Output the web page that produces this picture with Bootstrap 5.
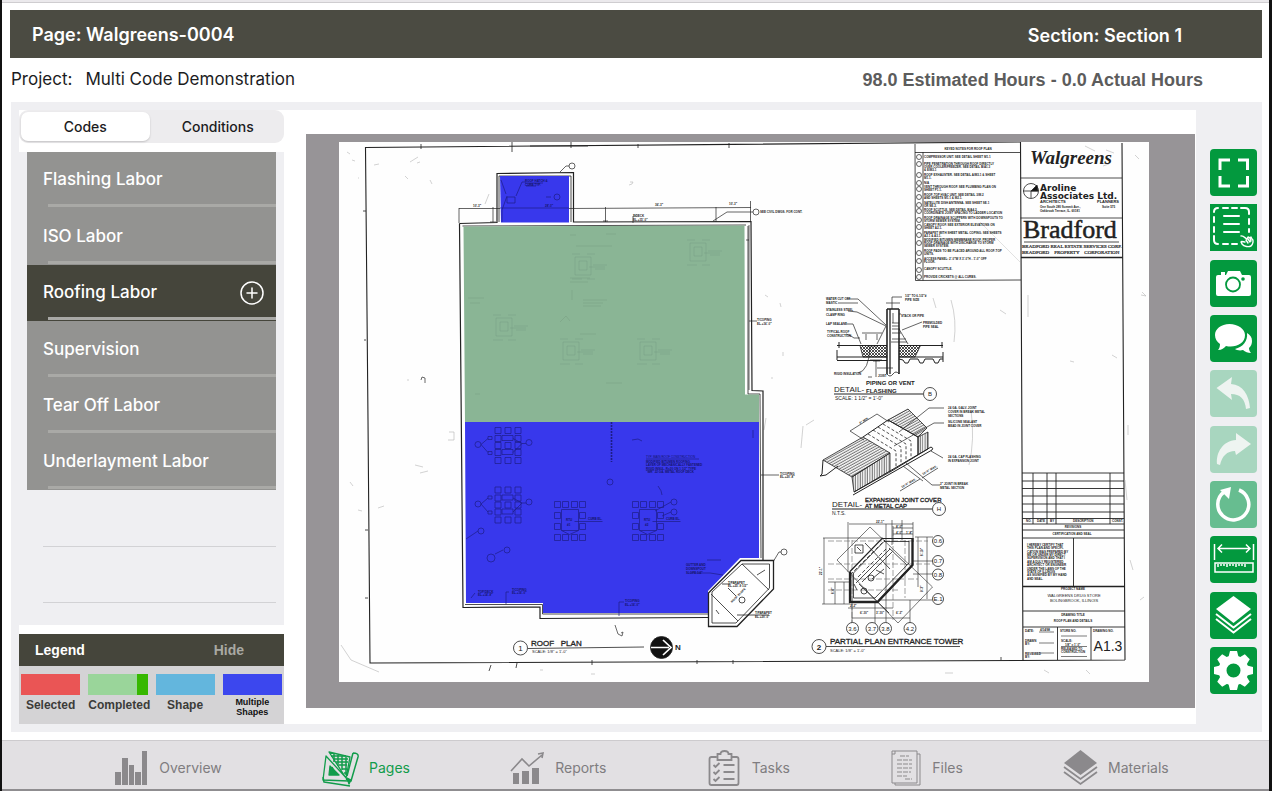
<!DOCTYPE html>
<html lang="en">
<head>
<meta charset="utf-8">
<meta name="viewport" content="width=device-width, initial-scale=1">
<title>Walgreens-0004</title>
<link href="https://cdn.jsdelivr.net/npm/bootstrap@5.3.0/dist/css/bootstrap.min.css" rel="stylesheet">
<style>
:root { --olive:#4b4b42; --olive-dark:#45453b; --panel:#efeff2; --green:#03993e; --grey:#8b898c; }
body { font-family: Inter, "Liberation Sans", sans-serif; color:#1c1c1e; background:#fff; border-left:2px solid #111; border-right:3px solid #111; }
.status-strip { height:3px; background:#ebe9ec; border-bottom:1px solid #cfcdd0; }
.page-head { background:var(--olive); color:#fff; height:48px; margin:7px 7px 0 8px; padding:2px 80px 0 22px; }
.page-head h1, .page-head p { font-size:18px; font-weight:600; margin:0; }
.project-line { height:44px; padding:0 66px 0 9px; font-size:17px; }
.project-line .gap-label { margin-right:13px; }
.hours { font-family:"Liberation Sans", sans-serif; font-weight:700; font-size:18px; color:#5c5c5c; }
.workspace { background:var(--panel); margin:0 7px 8px 9px; padding:8px 0 8px 8px; }
.side-pane { width:265px; flex:none; background:#fff; }
.segmented { background:#edecee; border-radius:9px; padding:2px; height:33px; margin-bottom:9px; gap:4px; }
.segmented button { flex:1; border:0; border-radius:7px; background:transparent; color:#1c1c1e; font-size:14px; font-weight:500; padding:0; }
.segmented button.active { background:#fff; box-shadow:0 1px 2px rgba(0,0,0,.18); }
.code-list { background:var(--panel); padding:0 8px 22px; }
.code-row { flex:1 1 56px; border:0; padding:0 12px 0 16px; background:#939391; color:#fff; font-size:17px; font-weight:500; text-align:left; position:relative; }
.code-row::after { content:""; position:absolute; left:21px; right:0; bottom:1px; height:3px; background:#a9a9a6; }
.code-row.active { background:var(--olive-dark); }
.code-blank { flex:1 1 56px; border-bottom:1px solid #d2d2d5; margin-left:16px; }
.legend-head { background:var(--olive-dark); color:#fff; height:32px; margin-top:9px; padding:0 40px 0 16px; font:700 14px "Liberation Sans", sans-serif; }
.legend-head button { border:0; background:transparent; color:#a9a9a3; font-weight:700; padding:0; }
.legend-body { background:#d4d3d5; height:58px; padding:8px 2px 0; gap:8px; font:700 12px/21px "Liberation Sans", sans-serif; color:#3c3c39; }
.legend-body > div { flex:1 1 0; min-width:0; text-align:center; white-space:nowrap; }
.swatch { height:21px; }
.sw-selected { background:#ea5555; } .sw-done { background:#9ad59a; border-right:11px solid #37b800; }
.sw-shape { background:#63b6dd; } .sw-multi { background:#3c47ee; }
.legend-small { font-size:9px; line-height:10px; color:#111; padding-top:2px; }
.viewer { background:#fff; padding:24px 1px 16px 22px; }
.canvas-area { background:#979497; padding:8px 46px 26px 33px; height:100%; }
.canvas-area svg { display:block; width:100%; height:auto; background:#fefefe; }
.tool-rail { width:66px; flex:none; padding:39px 5px 30px 14px; }
.tool { width:47px; height:47px; border:0; border-radius:4px; background:var(--green); color:#fff; padding:0; }
.tool svg { display:block; width:47px; height:47px; }
.tool.dim { background:#a8d6bf; color:#eef4f1; } .tool.half { background:#67bd90; }
.tabbar { background:#e2e0e3; border-top:1px solid #cdcbce; border-bottom:2px solid #8f8d90; height:51px; padding:5px 0 0 12px; }
.tabbar a { color:#7f7d80; text-decoration:none; font-size:14px; gap:10px; }
.tabbar a.active { color:#129c4b; }
.tabbar svg { width:35px; height:38px; }
.plan text { font-family:"Liberation Sans", sans-serif; fill:#222; stroke:none; }
.plan .t3 { font-size:3px; font-weight:700; } .plan .t4 { font-size:4px; } .plan .t6 { font-size:6px; } .plan .t8 { font-size:8px; }
.plan .mid { text-anchor:middle; } .plan .wt { font-weight:700; }
.plan .navy text { fill:#15156b; }
.plan .architect { font-family:"DejaVu Sans", sans-serif; font-size:9px; font-weight:700; }
.plan .owner { font-family:"Liberation Serif", serif; font-size:5px; stroke:#222; stroke-width:.2; }
</style>
</head>
<body class="d-flex flex-column min-vh-100">
<div class="status-strip"></div>
<header class="page-head d-flex justify-content-between align-items-center">
  <h1>Page: Walgreens-0004</h1><p>Section: Section 1</p>
</header>
<div class="project-line d-flex justify-content-between align-items-center">
  <div class="d-flex"><span class="gap-label">Project:</span><span>Multi Code Demonstration</span></div>
  <div class="hours">98.0 Estimated Hours - 0.0 Actual Hours</div>
</div>

<main class="workspace d-flex flex-grow-1">
  <aside class="side-pane d-flex flex-column">
    <div class="segmented d-flex"><button type="button" class="active">Codes</button><button type="button">Conditions</button></div>
    <div class="code-list d-flex flex-column flex-grow-1">
      <button type="button" class="code-row">Flashing Labor</button>
      <button type="button" class="code-row">ISO Labor</button>
      <button type="button" class="code-row active d-flex align-items-center justify-content-between">Roofing Labor
        <svg width="24" height="24" viewBox="0 0 24 24" fill="none" stroke="#fff" stroke-width="1.5" stroke-linecap="round"><circle cx="12" cy="12" r="11"/><path d="M12 7v10M7 12h10"/></svg></button>
      <button type="button" class="code-row">Supervision</button>
      <button type="button" class="code-row">Tear Off Labor</button>
      <button type="button" class="code-row">Underlayment Labor</button>
      <div class="code-blank"></div><div class="code-blank"></div>
    </div>
    <div class="legend-head d-flex justify-content-between align-items-center"><span>Legend</span><button type="button">Hide</button></div>
    <div class="legend-body d-flex">
      <div><div class="swatch sw-selected"></div>Selected</div>
      <div><div class="swatch sw-done"></div>Completed</div>
      <div><div class="swatch sw-shape"></div>Shape</div>
      <div><div class="swatch sw-multi"></div><div class="legend-small">Multiple<br>Shapes</div></div>
    </div>
  </aside>

  <section class="viewer flex-grow-1">
    <div class="canvas-area">
    <svg class="plan" viewBox="339 142 810 540" fill="none" stroke="#222" stroke-width=".8" role="img" aria-label="Roof plan drawing">
      <defs>
        <pattern id="hx" width="3" height="3" patternUnits="userSpaceOnUse"><path d="M0 0l3 3M3 0l-3 3" stroke="#222" stroke-width=".8"/></pattern>
        <pattern id="hl" width="4" height="2.4" patternUnits="userSpaceOnUse" patternTransform="rotate(-29)"><path d="M0 1h4" stroke="#333" stroke-width=".8"/></pattern>
        <pattern id="hv" width="2.4" height="4" patternUnits="userSpaceOnUse"><path d="M1 0v4" stroke="#333" stroke-width=".8"/></pattern>
        <g id="padsA" stroke="#1d1d86" stroke-width=".7">
          <path d="M0 0h6v6h-6zM10 0h6v6h-6zM20 0h6v6h-6zM0 8h6v6h-6zM20 8h6v6h-6zM0 15h6v6h-6zM10 15h6v6h-6zM20 15h6v6h-6zM0 22h6v6h-6zM20 22h6v6h-6zM0 30h6v6h-6zM10 30h6v6h-6zM20 30h6v6h-6z"/>
          <path d="M7 8h11v5h-11zM7 22h11v5h-11zM-7 9h4v3h-4zM-7 24h4v3h-4zM-7 11l-7 6 7 8M18 11l9 5-9 9M27 16h4"/><circle cx="-17" cy="17" r="3"/><circle cx="34" cy="15" r="3"/>
        </g>
        <g id="padsB" stroke="#1d1d86" stroke-width=".7">
          <path d="M0 0h6v6h-6zM8 0h6v6h-6zM17 0h6v6h-6zM25 0h6v6h-6zM0 11h6v6h-6zM25 11h6v6h-6zM0 22h6v6h-6zM25 22h6v6h-6zM0 33h6v6h-6zM8 33h6v6h-6zM17 33h6v6h-6zM25 33h6v6h-6zM7 8h17v21h-17zM7 29l8 4 9-4M20 20h28"/>
        </g>
        <g id="unit" stroke="#6d9079" stroke-width=".6" opacity=".45"><path d="M0 0h16v18h-16zM4 4h8v9h-8zM-3 -3h8M12 -3h8M-3 22h10M12 22h8M14 10h16M18 8h14M20 12h10"/></g>
      </defs>

      <!-- sheet frame -->
      <g stroke-width="1.1"><path d="M1020 142L365.500 147.500L368 420L370 663L1125 660M1020.500 142L1023 660M1122 143L1125 660"/></g>
      <path stroke-width=".8" d="M421 144v5M512 142v10M571 142v6M638 144v4M729 143v5M530 146h58M366 211h-3M366 340h-2M368 530h-3M368 598h-3M491 665l-2 6M517 663l-1 5M592 660v5M697 660v4M733 660v4M1001 660v-3"/>
      <g stroke="#b4b4b4" stroke-width=".6">
        <path d="M347 152l3 2M352 160l3 1M358 178h1M374 165l5-1M410 162l8-5M417 163l3-1M405 176l3 3M430 180l2 4M485 204l4-10M449 432h5v8h-6M350 482l3 4M358 510l4 1M378 508l6-2M415 465l8 2M420 473l8-2M407 380h2M341 645l10 15 28 12M540 670h3M591 674h4M630 182h3l-1 2-3 1M765 295l3 2M780 303l1 4M783 352v4M771 378h2M764 430l2-12M801 448l2-22M806 425l8-5M933 298l3 10M951 300q6 20 3 42M971 410q4 30-2 55M1028 295v22M1142 292l4 4-5-1M1070 361l4 1M1112 355l5 3M1000 310l6 4M1085 146l10 5M1106 150l8 3M1103 166l6-2M1135 155l4 4M1128 425v10M1130 560l3 10M1140 600l4-3M1086 670l4 4M1044 670l5 3M945 673h8M1125 480l2 20"/>
        <path d="M980 222l40 40" stroke="#ccc"/>
      </g>
      <path d="M421 380l1-3 3 1v5" stroke="#444"/>
      <path d="M615 625l3 9 4 2 1-4-2 1" stroke="#444"/>

      <!-- building walls -->
      <g stroke-width="1.2">
        <path d="M459.500 223.500L497 222.500V173.500L573.500 172.500V222L751 221.500L752 390.500L763 391V560M459.500 223.500L463 607.500L540 607V618.500L708 617.500"/>
        <path stroke-width=".8" d="M499 222V176H571V222M462.500 226L746 225M748 226L748 394H760L761 558M465 604.500H542.500V614H708"/>
      </g>
      <!-- measured shapes -->
      <path d="M463.500 226.500L744.500 225.500L745 394.500H759V422H465z" fill="#8ab595" stroke="none"/>
      <g fill="#3838ec" stroke="none"><path d="M500 176H569V222.500H501z"/><path d="M465 422H759V558H740L708 591V613H543V603H466z"/></g>
      <use href="#unit" x="575" y="257"/><use href="#unit" x="496" y="318"/><use href="#unit" x="563" y="342"/><use href="#unit" x="640" y="342"/><use href="#unit" x="690" y="243"/>
      <g stroke="#6d9079" stroke-width=".8" opacity=".4"><path d="M576 246h36M606 234h10M570 235h6M583 300h24M583 303h20M583 306h18M572 290v10M560 322l6-6 4 5M468 298h16M470 303h10M606 383h16M475 394h5M570 278h20M570 282h18M580 334h16"/></g>
      <g stroke="#1d1d86" stroke-width=".7">
        <path d="M501 180l5 14M502 222v-12l5-14M507 197h8v6h-8zM516 196l6-14h4M546 197h5M525 183h18M526 186h10M500 208h69"/><circle cx="557" cy="197" r="3"/>
        <path d="M495 554l8-4M466 539l12-8M506 604v-12h3M619 616v-14h5M471 598l4-5M690 573l20 0 13 2M707 560h14M632 440l6-1 4 2M658 486q4 5 4 9M753 430v8"/>
        <circle cx="491" cy="558" r="4"/><circle cx="507" cy="550" r="3"/><circle cx="481" cy="531" r="3"/><circle cx="610" cy="482" r="3"/><circle cx="674" cy="502" r="3"/><circle cx="674" cy="512" r="3"/><path d="M671 502l-16 9M671 512l-9 4"/>
        <path d="M611.500 422v40" stroke-width="1.600" stroke-dasharray="2 1"/><path d="M646 459h53"/>
      </g>
      <use href="#padsA" x="495" y="427.500"/><use href="#padsA" x="495" y="487"/><use href="#padsB" x="554.500" y="501.500"/><use href="#padsB" x="632.500" y="501.500"/>
      <g class="navy">
        <text class="t3" x="525" y="182">ROOF HATCH &amp;</text><text class="t3" x="525" y="186">CURB TYP.</text>
        <text x="646" y="458" class="t4" style="font-size:3px">TYP. MAIN ROOF CONSTRUCTION</text>
        <text class="t3" x="646" y="463">MODIFIED BITUMEN ROOFING</text><text class="t3" x="646" y="466">LAYER OF MECHANICALLY FASTENED</text><text class="t3" x="646" y="470">RIGID INSUL. R=20 ON 1 1/2" TYPE</text><text class="t3" x="646" y="473">"WR" 22 GA. METAL ROOF DECK</text>
        <text class="t3" x="478" y="593">TOP/DECK</text><text class="t3" x="478" y="596">EL.+14'-8"</text><text class="t3" x="512" y="591">T/COPING</text><text class="t3" x="512" y="594">EL.+16'-0"</text><text class="t3" x="625" y="602">T/COPING</text><text class="t3" x="625" y="606">EL.+16'-0"</text>
        <text class="t3" x="686" y="566">GUTTER AND</text><text class="t3" x="686" y="570">DOWNSPOUT</text><text class="t3" x="686" y="574">SLOPE 1/4"</text>
        <text class="t3" x="566" y="521">RTU</text><text class="t3" x="567" y="526">#1</text><text class="t3" x="644" y="521">RTU</text><text class="t3" x="645" y="526">#2</text><text class="t3" x="588" y="520">CURB EL.</text><text class="t3" x="666" y="520">CURB EL.</text><text class="t3" x="545" y="207">28'-0"</text>
      </g>

      <!-- dimensions -->
      <g stroke-width=".7">
        <path d="M459 223v-15M459 208.500h41M569 208.500L751 207.500M493 207v15M605.500 207v15M716 207v15M750.500 201v20M490 222h6M603 221h5M713 221l14-9h26M633 223v-7h3M560 172l6-6h3M749 321h8M761 475h18M749 225v165M746 240h3"/>
        <circle cx="572" cy="166" r="3"/><circle cx="756" cy="212" r="3"/><circle cx="784" cy="552" r="3"/><path d="M773 562l6-10h2"/>
        <text class="t3" x="473" y="207">10'-3"</text><text class="t3" x="655" y="206">36'-3"</text><text class="t3" x="729" y="205">10'-3"</text><text class="t3" x="633" y="217">T/DECK</text><text class="t3" x="633" y="221">EL.+15'-0"</text>
        <text class="t3" x="760" y="213">SEE CIVIL DWGS. FOR CONT.</text><text class="t3" x="757" y="321">T/COPING</text><text class="t3" x="757" y="325">EL.+16'-0"</text><text class="t3" x="780" y="475">T/COPING</text><text class="t3" x="780" y="478">EL.+20'-8"</text>
      </g>

      <!-- entrance tower on roof -->
      <path d="M708.500 593L741 560.500H773.500V589L737 626.500H708.500z" fill="#fff" stroke-width="1.300"/>
      <path stroke-width=".8" d="M712 592L742 564H769.500V588L736 623H712zM742 564L769 590M711 594L738 621M757 575l8-5M722 584h8M719 614l-3-4M728 588l8 8M737 615h32"/>
      <circle cx="742" cy="600" r="3"/>
      <text class="t3" x="728" y="584">T/PARAPET</text><text class="t3" x="728" y="587">EL.+25'-9 1/2"</text><text class="t3" x="755" y="614">T/PARAPET</text><text class="t3" x="755" y="618">EL.+20'-0"</text><text class="t3" x="732" y="603" transform="rotate(-45 732 603)">ROOF SLOPE</text>

      <!-- plan title -->
      <circle cx="520.500" cy="648" r="7"/><text class="t8 mid" x="520.500" y="651">1</text>
      <text class="t8" x="531" y="646" xml:space="preserve" style="stroke:#222;stroke-width:.3">ROOF   PLAN</text><path d="M528 648.500L644 647"/><text class="t4" x="532" y="652.500">SCALE: 1/8" = 1'-0"</text>
      <circle cx="661.500" cy="647.500" r="11" fill="#111"/><path d="M651 647.500h18M663 640l8 7.500-8 7.500" stroke="#fff" stroke-width="1.700"/><text class="t8 wt" x="675" y="650">N</text>

      <!-- keyed notes -->
      <path d="M915 144L915.500 280.500L1021 280M915 152.500H1020M923 152V280.500"/>
      <text class="t3 mid" x="968" y="149.500">KEYED NOTES FOR ROOF PLAN</text>
      <g stroke-width=".7"><circle cx="919" cy="157" r="2.500"/><circle cx="919" cy="164" r="2.500"/><circle cx="919" cy="175" r="2.500"/><circle cx="919" cy="183" r="2.500"/><circle cx="919" cy="189" r="2.500"/><circle cx="919" cy="197" r="2.500"/><circle cx="919" cy="205" r="2.500"/><circle cx="919" cy="211" r="2.500"/><circle cx="919" cy="220" r="2.500"/><circle cx="919" cy="227" r="2.500"/><circle cx="919" cy="235" r="2.500"/><circle cx="919" cy="243" r="2.500"/><circle cx="919" cy="253" r="2.500"/><circle cx="919" cy="261" r="2.500"/><circle cx="919" cy="270" r="2.500"/><circle cx="919" cy="277" r="2.500"/></g>
      <g class="t3">
        <text x="924" y="158">COMPRESSOR UNIT. SEE DETAIL SHEET M1.1</text><text x="924" y="165">PIPE PENETRATION THROUGH ROOF DIRECTLY</text><text x="924" y="168">OVER COOLER/FREEZER. SEE DETAIL B/A1.3</text><text x="924" y="171">&amp; E/M3.1</text><text x="924" y="176">ROOF EXHAUSTER. SEE DETAIL A/M3.1 &amp; SHEET</text><text x="924" y="179">M1.1.</text><text x="924" y="184">N/A</text><text x="924" y="188">VENT THROUGH ROOF. SEE PLUMBING PLAN ON</text><text x="924" y="191">SHEET P1.1.</text><text x="924" y="196">ROOF-TOP HVAC UNIT. SEE DETAIL 3/M.2</text><text x="924" y="199">AND SHEETS M1.1 &amp; M2.1.</text><text x="924" y="204">SATELLITE DISH ANTENNA. SEE SHEET SE.1</text><text x="924" y="207">OR SE.2.</text><text x="924" y="211">ROOF SCUTTLE. SEE DETAIL B/A4.2.</text><text x="924" y="214">COORDINATE JOIST SPACING TO LADDER LOCATION</text><text x="924" y="219">ROOF DRAINAGE SCUPPERS WITH DOWNSPOUTS TO</text><text x="924" y="222">STORM SEWER SYSTEM.</text><text x="924" y="226">CANOPY ROOF. SEE EXTERIOR ELEVATIONS ON</text><text x="924" y="229">SHEET A2.1.</text><text x="924" y="234">PARAPET WITH SHEET METAL COPING. SEE SHEETS</text><text x="924" y="237">A2.1 &amp; A3.1.</text><text x="924" y="241">MODIFIED BITUMEN MEMBRANE ROOF. PROPER</text><text x="924" y="244">ROOF DRAINAGE WITH DISCHARGE TO STORM</text><text x="924" y="247">SEWER SYSTEM.</text><text x="924" y="252">ROOF PADS TO BE PLACED AROUND ALL ROOF-TOP</text><text x="924" y="255">UNITS.</text><text x="924" y="260">ACCESS PANEL: 2'-0"W X 3'-0"H - 1'-0" OFF</text><text x="924" y="263">FLOOR.</text><text x="924" y="270">CANOPY SCUTTLE.</text><text x="924" y="278">PROVIDE CRICKETS @ ALL CURBS.</text>
      </g>

      <!-- title block -->
      <text x="1030" y="164" style="font:italic 700 19px 'Liberation Serif',serif">Walgreens</text>
      <path d="M1020.500 178H1122M1020.500 218H1122"/><path d="M1021 257.500H1122.500" stroke-width="1.600"/><path d="M1024 242H1119"/>
      <circle cx="1031" cy="191" r="7.500"/><path d="M1031 191h7l-1-6z" fill="#111"/><path d="M1023 191h15M1031 191v7"/>
      <text class="architect" x="1040" y="191">Aroline</text><text class="architect" x="1040" y="199">Associates Ltd.</text>
      <text class="t4 wt" x="1040" y="203">ARCHITECTS</text><text class="t4 wt" x="1097" y="203">PLANNERS</text><text class="t3" x="1040" y="208">One South 280 Summit Ave.,</text><text class="t3" x="1102" y="208">Suite 575</text><text class="t3" x="1040" y="212">Oakbrook Terrace, IL. 60181</text>
      <text x="1023" y="238" style="font:26px 'Liberation Serif',serif;stroke:#222;stroke-width:.5">Bradford</text>
      <text class="owner" x="1022" y="248">BRADFORD REAL ESTATE SERVICES CORP.</text><text class="owner" x="1022" y="254" xml:space="preserve">BRADFORD    PROPERTY    CORPORATION</text>
      <path stroke-width=".9" d="M1022 473H1124M1022 481H1124M1022 488.500H1124M1022 496H1124M1022 504H1124M1022 512H1124M1022 518.500H1124M1022 524H1124M1022 530H1124M1023 538H1124M1023 611H1125M1023 627H1125M1033 473V524M1047 473V524M1056 473V524M1110 473V524M1073.500 538V586M1057.500 627V660M1091 627V660"/><path d="M1023 586.500H1125" stroke-width="1.500"/>
      <g class="t3"><text x="1026" y="522">NO.</text><text x="1037" y="522">DATE</text><text x="1050" y="522">BY</text><text x="1073" y="522">DESCRIPTION</text><text x="1112" y="522">CONST.</text><text class="mid" x="1073" y="528">REVISIONS</text><text class="mid" x="1072" y="535">CERTIFICATION AND SEAL</text>
        <text x="1027" y="546">I HEREBY CERTIFY THAT</text><text x="1027" y="549">THIS PLAN AND SPECIFI-</text><text x="1027" y="553">CATION WAS PREPARED BY</text><text x="1027" y="556">ME OR UNDER MY DIRECT</text><text x="1027" y="559">SUPERVISION AND THAT I</text><text x="1027" y="563">AM A DULY REGISTERED</text><text x="1027" y="566">ARCHITECT OR ENGINEER</text><text x="1027" y="570">UNDER THE LAWS OF THE</text><text x="1027" y="573">STATE OF ILLINOIS</text><text x="1027" y="576">AS SIGNIFIED BY MY HAND</text><text x="1027" y="580">AND SEAL.</text>
        <text class="mid" x="1073" y="590">PROJECT NAME</text><text class="mid" x="1073" y="616">DRAWING TITLE</text><text class="mid" x="1073" y="622">ROOF PLAN AND DETAILS</text>
        <text x="1025" y="632">DATE:</text><text x="1040" y="631">4/14/98</text><text x="1060" y="632">STORE NO.</text><text x="1093" y="632">DRAWING NO.</text><text x="1025" y="642">DRAWN</text><text x="1025" y="645">BY:</text><text x="1025" y="655">REVIEWED</text><text x="1025" y="658">BY:</text><text x="1061" y="642">SCALE:</text><text x="1065" y="646">1/8" = 1'-0"</text><text x="1061" y="650">RELEASED TO</text><text x="1061" y="653">CONSTRUCTION</text></g>
      <text class="t4 mid" x="1074" y="597">WALGREENS DRUG STORE</text><text class="t4 mid" x="1074" y="602">BOLINGBROOK, ILLINOIS</text>
      <path stroke-width=".6" d="M1039 632h15M1039 643h15M1039 653h15M1061 636h26M1061 646.500h26M1061 656.500h26"/>
      <text class="mid" x="1108" y="651" style="font-family:'Liberation Sans Narrow','Liberation Sans',sans-serif;font-size:14px">A1.3</text>

      <!-- detail B, pipe flashing -->
      <path d="M860 345.500H920.500L915 357H863z" fill="url(#hx)"/>
      <path d="M837 345.500H943M837 357H943M837 360.500H887M899 359l4 1 2 3h3l2-4h8l2 4h3l2-4h8l2 4h3l2-4h3M839 342v6M942 342v6M837 350v10M943 352v10" stroke-width="1"/>
      <path d="M887 309V374q3 4 6 0t6 0V309" fill="#fff"/><path d="M887 309V374M890 309V374M899 309V374M887 309H899" stroke-width="1.300"/>
      <path d="M886 326l-9 18M899 329l9 15M892 323h7M892 326h7M892 329h8M892 333h9M892 339h14M891 342h16M893 313v10M870 360h12M876 361v16M873 361h7M866 334v6M877 334v6M862 333h20M868 377h4M877 368h16M892 297v12M886 303h14M892 297h10M847 299h11l28 26M838 303h20M848 311l9 1 29 14M845 324h8l8 20M846 334q6 2 8 4h6M899 314h2M902 330l20-8M870 347q-1 24-12 26M867 346h10" stroke-width=".7"/>
      <g class="t3"><text x="826" y="300">WATER CUT OFF</text><text x="826" y="304">MASTIC</text><text x="826" y="311">STAINLESS STEEL</text><text x="826" y="316">CLAMP RING</text><text x="826" y="325">LAP SEALANT</text><text x="827" y="333">TYPICAL ROOF</text><text x="827" y="337">CONSTRUCTION</text><text x="905" y="297">1/2" TO 6-1/2"#</text><text x="905" y="301">PIPE SIZE</text><text x="901" y="317">STACK OR PIPE</text><text x="923" y="324">PREMOLDED</text><text x="923" y="328">PIPE SEAL</text><text x="834" y="375">RIGID INSULATION</text><text x="878" y="377">JOIST</text></g>
      <text class="t6 wt" x="866" y="385">PIPING OR VENT</text><text class="t8" x="834" y="392">DETAIL-</text><text class="t6 wt" x="866" y="392.500">FLASHING</text><path d="M834 394H923" stroke-width="1.200"/><text x="835" y="400" style="font-size:5px">SCALE: 1 1/2" = 1'-0"</text><circle cx="930" cy="394" r="6.500"/><text class="t6 mid" x="930" y="396">B</text>

      <!-- detail H, expansion joint cover -->
      <path d="M823 460L863 437L890 453L852 477z" fill="url(#hl)"/><path d="M852 477L890 453V472L854 492z" fill="url(#hv)"/>
      <path d="M888 420L908 409L927 428L918 437z" fill="url(#hl)"/><path d="M918 437L928 432V449L918 455z" fill="url(#hv)"/>
      <path d="M823 460L822 474L820 476M863 437L888 420L918 437V455L890 472M854 492L931 447M853 495L932 450M931 447q3 1 1 3M820 476l6-1 12-9" stroke-width="1"/>
      <path d="M868 434l28 17v17M873 430l28 17v18M878 427l28 17v18M883 424l28 17v17" stroke-dasharray="3 2"/>
      <path d="M850 431L877 414M850 431l14 9M877 414l12 8M899 432l30-24h15M894 446l40-23h10M931 451l12 7M906 463l26 22h8M903 466l20 15M900 491L920 479M922 478L938 468" stroke-width=".7"/>
      <g class="t3"><text x="948" y="409">24 GA. GALV. JOINT</text><text x="948" y="413">COVER IN BREAK METAL</text><text x="948" y="417">SECTIONS</text><text x="948" y="423">SILICONE SEALANT</text><text x="948" y="427">BEAD IN JOINT COVER</text><text x="948" y="458">24 GA. CAP FLASHING</text><text x="948" y="462">IN EXPANSION JOINT</text><text x="940" y="485">2" JOINT IN BREAK</text><text x="940" y="489">METAL SECTION</text><text x="860" y="424" transform="rotate(-30 860 424)">6" MIN.</text><text x="902" y="488" transform="rotate(-30 902 488)">10'-0" MAX.</text><text x="923" y="475" transform="rotate(-30 923 475)">10'-0" MAX.</text></g>
      <text class="t6 wt" x="865" y="501.500" style="font-weight:400;stroke:#222;stroke-width:.3">EXPANSION JOINT COVER</text><text class="t8" x="832" y="507">DETAIL-</text><text class="t6 wt" x="865" y="507.500" style="font-weight:400;stroke:#222;stroke-width:.3">AT METAL CAP</text><path d="M832 509H932" stroke-width="1.200"/><text x="832" y="515" style="font-size:5px">N.T.S.</text><circle cx="939" cy="509" r="6.500"/><text class="t6 mid" x="939" y="511">H</text>

      <!-- partial plan, entrance tower -->
      <g stroke-width=".6"><path d="M837 560L870 527L932.500 587L898 623zM849 524H913M848 522v50M913 522v20M893 528h20M893 534h20M893 526v15M823 538h60M824 538V604M822 604h28M852 574v52M875 602v24M886 524v104M910 600v26M852 618h58M848 608h45M918 537v50M927 537v62M915 537h18M913 561h20M913 574h20M880 600h52M835 582v22M844 582v22M828 582h22M892 520v25M902 520v20"/>
        <path d="M828 541h100M828 564h105M828 579h90M828 590h70M893 530v90M905 540v58M852 540v90" stroke-dasharray="6 2" stroke="#666"/></g>
      <path d="M850 571.500L882 538.500H912.500V565L877.500 602H850z" stroke-width="1.200"/><path d="M912.500 538V565L877.500 602H850V572" stroke-width="2.300"/>
      <path d="M853.500 573L884 541.500H909M909 541V563L875 598H853.500V573M856 583l34-34M862 582l30-30M859 584l30 29M889 548l18 17M865 543l25 26M857 590l-3-6"/><path d="M850 575l35-35M858 577l28-28" stroke-dasharray="4 2"/>
      <path d="M855 545h8v8h-8zM857 547l4 4" /><circle cx="871" cy="578" r="3"/><circle cx="864" cy="591" r="3"/><path d="M872 579l12-10M876 570l8 4"/>
      <g fill="#fff"><circle cx="938" cy="541" r="5.500"/><circle cx="938" cy="561" r="5.500"/><circle cx="938" cy="574.500" r="5.500"/><circle cx="938" cy="599" r="5.500"/><circle cx="852.500" cy="628.500" r="6"/><circle cx="872" cy="628.500" r="6"/><circle cx="885.500" cy="628.500" r="6"/><circle cx="910" cy="628.500" r="6"/></g>
      <g class="mid t6"><text x="938" y="543">0.6</text><text x="938" y="563">0.7</text><text x="938" y="577">0.8</text><text x="938" y="601">E.1</text><text x="852.500" y="631">3.6</text><text x="872" y="631">3.7</text><text x="885.500" y="631">3.8</text><text x="910" y="631">4.2</text></g>
      <g class="t3"><text x="876" y="523">22'-1"</text><text x="896" y="528">8'-0"</text><text x="896" y="534">4'-0"</text><text x="906" y="534">1'-8"</text><text x="860" y="614">6'-10"</text><text x="876" y="614">3'-10"</text><text x="896" y="614">6'-3"</text><text x="850" y="607">2'-2"</text><text x="822" y="575" transform="rotate(-90 822 575)">22'-1"</text><text x="923" y="556" transform="rotate(-90 923 556)">6'-10"</text><text x="923" y="592" transform="rotate(-90 923 592)">8'-3"</text><text x="834" y="594" transform="rotate(-90 834 594)">6'-0"</text></g>
      <circle cx="819" cy="646.500" r="7"/><text class="t8 mid wt" x="819" y="649.500">2</text><text class="t8" x="830" y="644" style="stroke:#222;stroke-width:.3">PARTIAL PLAN ENTRANCE TOWER</text><path d="M826 646.500H960"/><text class="t4" x="830" y="651.500">SCALE: 1/8" = 1'-0"</text>
    </svg>
    </div>
  </section>

  <nav class="tool-rail d-flex flex-column justify-content-between" aria-label="Drawing tools">
    <button type="button" class="tool" aria-label="Full screen"><svg viewBox="0 0 47 47" fill="none" stroke="currentColor" stroke-width="3"><path d="M10 21V11H20M28 11H37.500V21M37.500 27V37H28M20 37H10V27"/></svg></button>
    <button type="button" class="tool rounded-0" aria-label="Select area"><svg viewBox="0 0 47 47" fill="none" stroke="currentColor" stroke-width="2" stroke-linecap="round"><path d="M4 8q0-4 4-4M13 4h5M22 4h5M31 4h4q4 0 4 4v2M39 15v5M39 25v3M4 13v5M4 23v5M4 32v4q0 4 4 4M13 40h5M22 40h5M14 12h15M14 20h15M14 28h15"/><path stroke-width="1.400" stroke-linejoin="round" d="M31 32c2-1 5 3 6 3l1-2 2 1 1-1 1 2c2 1 1 5-1 7-2 1-7 1-9-2l-1-2c0-1 3 0 4 0M36 36l2 3M38 35l2 3M40 34l1 3"/></svg></button>
    <button type="button" class="tool" aria-label="Camera"><svg viewBox="0 0 47 47"><path fill="currentColor" d="M8 15q-2 0-2 2v17q0 2 2 2h31q2 0 2-2V17q0-2-2-2h-7l-2-4H18l-2 4h-1v-3h-4v3z"/><circle cx="23" cy="24.500" r="7" fill="none" stroke="#03993e" stroke-width="1.800"/><circle cx="33" cy="19" r="1.800" fill="#03993e"/></svg></button>
    <button type="button" class="tool" aria-label="Comments"><svg viewBox="0 0 47 47" fill="currentColor"><path d="M19.500 9C11 9 5 14 5 20c0 4 2 7 5 9 0 3-1 5-2 6 4 0 6-2 8-4 9 2 19-2 19-11 0-6-7-11-15.500-11z"/><path d="M37 18c3 2 5 4 5 8 0 3-1 5-3 7 0 2 1 4 2 5-3 0-6-1-8-3-3 1-7 0-8-1 8-2 13-8 12-16z"/></svg></button>
    <button type="button" class="tool dim" aria-label="Undo"><svg viewBox="0 0 47 47" fill="currentColor"><path d="M6.500 18L22 7l-1 7c12 1 18 11 19 24l-4 1c-1-10-6-15-15-15l1 6z"/></svg></button>
    <button type="button" class="tool dim" aria-label="Redo"><svg viewBox="0 0 47 47" fill="currentColor"><path d="M41 18L26 7v7C13 15 6 26 7 38l3 1c2-9 7-14 15-14l1 4z"/></svg></button>
    <button type="button" class="tool half" aria-label="Reset"><svg viewBox="0 0 47 47" fill="none" stroke="currentColor"><path d="M29 9A15.500 15.500 0 1 1 14 11" stroke-width="3.500"/><path d="M10 9l11-3-2 12z" fill="currentColor" stroke="none"/></svg></button>
    <button type="button" class="tool" aria-label="Measure"><svg viewBox="0 0 47 47" fill="none" stroke="currentColor" stroke-width="1.500"><path d="M4.500 8V24M43.500 8V24M8 12.500H40M12 8.500l-4 4 4 4M36 8.500l4 4-4 4M5 27H43V36H5zM8 28v3M11 28v2M14 28v2M17 28v3M20 28v2M23 28v2M26 28v3M29 28v2M32 28v2M35 28v3"/></svg></button>
    <button type="button" class="tool" aria-label="Layers"><svg viewBox="0 0 47 47"><path fill="currentColor" d="M23.500 4L41 17 23.500 31 6 17z"/><path fill="none" stroke="currentColor" stroke-width="2" d="M6 22l17.500 13.500L41 22M6 27l17.500 13.500L41 27"/></svg></button>
    <button type="button" class="tool" aria-label="Settings"><svg viewBox="0 0 47 47"><defs><path id="tooth" fill="currentColor" d="M18 12L20 4H27L29 12z"/></defs><circle cx="23.500" cy="23.500" r="11" fill="none" stroke="currentColor" stroke-width="8"/><use href="#tooth"/><use href="#tooth" transform="rotate(45 23.500 23.500)"/><use href="#tooth" transform="rotate(90 23.500 23.500)"/><use href="#tooth" transform="rotate(135 23.500 23.500)"/><use href="#tooth" transform="rotate(180 23.500 23.500)"/><use href="#tooth" transform="rotate(225 23.500 23.500)"/><use href="#tooth" transform="rotate(270 23.500 23.500)"/><use href="#tooth" transform="rotate(315 23.500 23.500)"/></svg></button>
  </nav>
</main>

<nav class="tabbar d-flex justify-content-evenly" aria-label="Main">
  <a href="#" class="d-flex align-items-center"><svg viewBox="0 0 35 38" fill="#8b898c"><path d="M1 23h6v13H1zM8 9h6v27H8zM15 16h5v20h-5zM21 23h6v13h-6zM28 2h5v34h-5z"/></svg>Overview</a>
  <a href="#" class="active d-flex align-items-center"><svg viewBox="0 0 37 38" style="width:37px" fill="none" stroke="#129c4b" stroke-width="1.300" stroke-linejoin="round"><path d="M7 3L28 8 24 29zM4 7L27 32 1 31z"/><path d="M8 17l9 9-10 0z" fill="#129c4b"/><path d="M10 18l3 6M9 7h15M12 10h14M14 13h12M17 16h8M20 20h5M22 24h3M12 5v8M16 6v11M20 7v14M24 8v18" stroke-width="1.500"/><path d="M31 4q6 0 5 4l-7 24-5-2M31 4l-6 23M1 28l1 5 26 4" stroke-width="1.500"/><path d="M25 29l4 2-2 4z" fill="#129c4b"/></svg>Pages</a>
  <a href="#" class="d-flex align-items-center"><svg viewBox="0 0 35 38"><path fill="#8b898c" d="M3 24h6v11H3zM12 22h7v13h-7zM22 19h7v16h-7z"/><path fill="none" stroke="#8b898c" stroke-width="1.600" d="M1 22L12 10l7 7L32 6M28 5l5-1-1 5"/></svg>Reports</a>
  <a href="#" class="d-flex align-items-center"><svg viewBox="0 0 34 38" fill="none" stroke="#8b898c" stroke-width="1.800"><path d="M9 8H4q-2 0-2 2v24q0 2 2 2h25q2 0 2-2V10q0-2-2-2h-5M10 5h3q0-3 4-3t4 3h3v6H10zM6 16l2 2 4-4M6 23l2 2 4-4M6 30l2 2 4-4M16 16h11M16 23h11M16 30h11"/></svg>Tasks</a>
  <a href="#" class="d-flex align-items-center"><svg viewBox="0 0 32 38" style="width:32px" fill="none" stroke="#8b898c"><path d="M2 2H27V34H2zM5 36H30V5M27 5h3M5 34v2M5 2v3H2"/><path stroke-width="1.200" stroke-dasharray="5 1" d="M10 7h9M7 11h15M7 15h15M7 19h15M7 23h14M7 27h10M15 30h7"/></svg>Files</a>
  <a href="#" class="d-flex align-items-center"><svg viewBox="0 0 35 38"><path fill="#8b898c" d="M17.500 1L34 14 17.500 26 1 14z"/><path fill="none" stroke="#8b898c" stroke-width="1.800" d="M1 18l16.500 12L34 18M1 23l16.500 12L34 23"/></svg>Materials</a>
</nav>
<script src="https://cdn.jsdelivr.net/npm/bootstrap@5.3.0/dist/js/bootstrap.bundle.min.js"></script>
</body>
</html>
